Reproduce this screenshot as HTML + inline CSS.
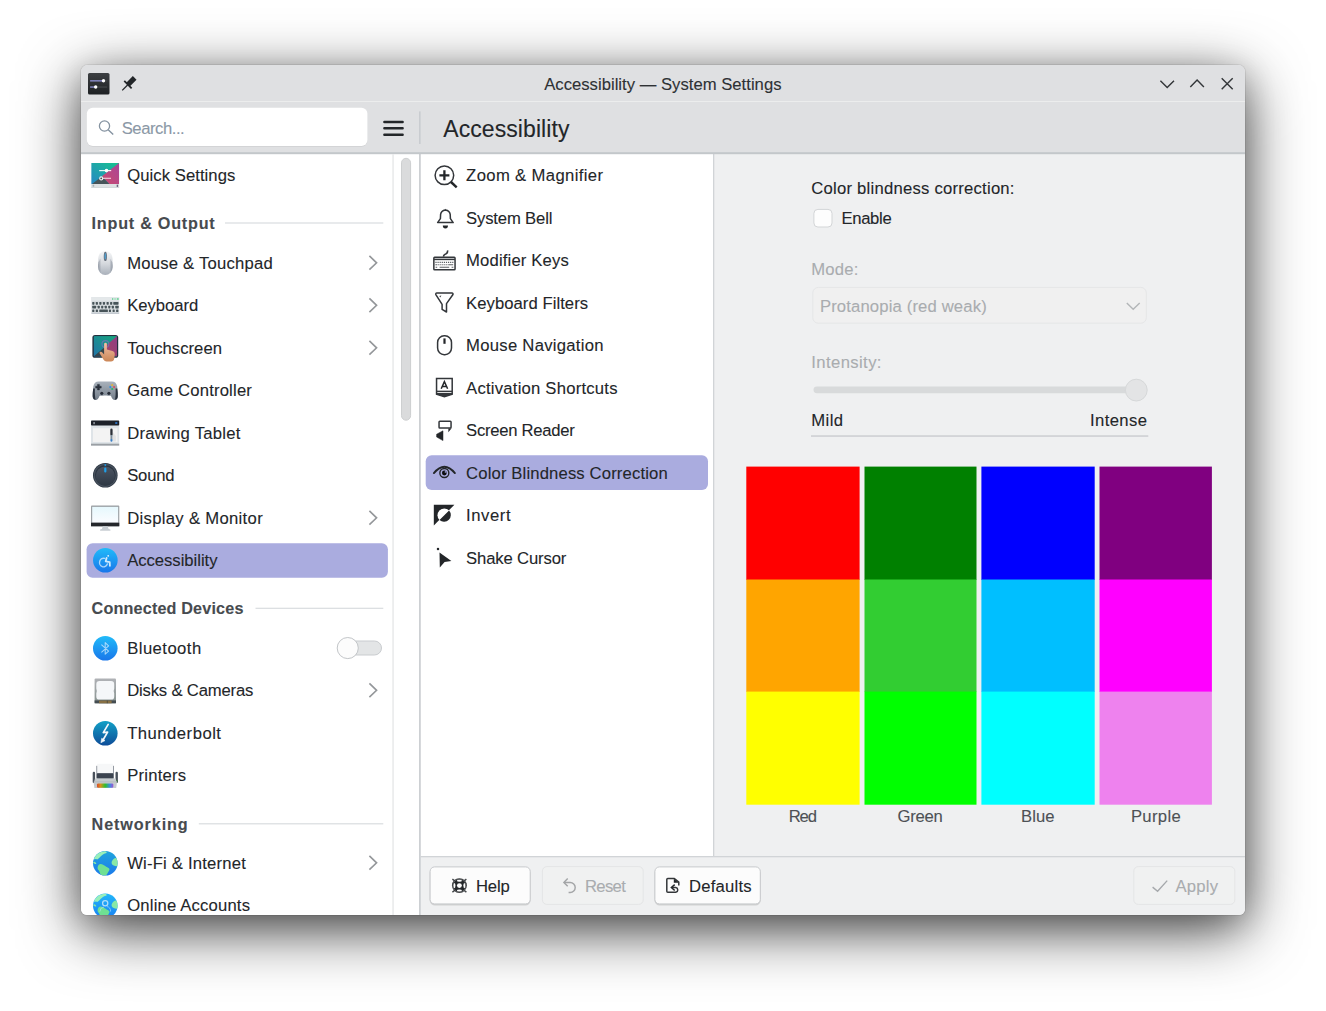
<!DOCTYPE html>
<html>
<head>
<meta charset="utf-8">
<title>Accessibility — System Settings</title>
<style>
*{box-sizing:border-box;margin:0;padding:0}
html,body{width:1326px;height:1011px;overflow:hidden;background:#fff}
body{font-family:"Liberation Sans",sans-serif;font-size:16.67px;color:#232629;position:relative}
#win{position:absolute;left:81px;top:65px;width:1164px;height:850px;background:#eff0f1;border-radius:7px 7px 6px 6px;
 box-shadow:0 0 0 1px rgba(0,0,0,.07),0 15px 60px 0 rgba(0,0,0,.72),0 7.5px 30px 0 rgba(0,0,0,.18)}
#clip{position:absolute;left:0;top:0;width:1164px;height:850px;overflow:hidden;border-radius:7px 7px 6px 6px}
#pg{position:absolute;left:-81px;top:-65px;width:1326px;height:1011px}
.t{position:absolute;white-space:nowrap;line-height:24px;height:24px;-webkit-text-stroke:0.1px currentColor}
svg{position:absolute;left:0;top:0;overflow:visible}
</style>
</head>
<body>
<div id="win"><div id="clip"><div id="pg">
<svg width="1326" height="1011" viewBox="0 0 1326 1011">
<rect x="81" y="65" width="1164" height="36" fill="#dfe0e2"/>
<rect x="81" y="101" width="1164" height="1" fill="#eceded"/>
<rect x="81" y="102" width="1164" height="51" fill="#dfe0e2"/>
<rect x="81" y="153" width="338.2" height="762" fill="#ffffff"/>
<rect x="420.5" y="153" width="292.5" height="703" fill="#ffffff"/>
<rect x="714" y="153" width="531" height="703" fill="#eff0f1"/>
<rect x="420.5" y="857" width="824.5" height="58" fill="#eff0f1"/>
<rect x="419.1" y="153" width="1.6" height="762" fill="#c9ccd0"/>
<rect x="713" y="153" width="1.3" height="703.5" fill="#d1d4d7"/>
<rect x="420.5" y="856" width="824.5" height="1.3" fill="#d1d4d7"/>
<rect x="81" y="152.2" width="1164" height="2" fill="#c3c7ca"/>
<rect x="419.2" y="111.4" width="1.3" height="32.6" fill="#c4c7cb"/>
<rect x="86.8" y="108.3" width="280.7" height="38.4" rx="6" fill="#000000" opacity=".07"/>
<rect x="86.8" y="107.8" width="280.7" height="38.2" rx="6" fill="#ffffff"/>
<rect x="392.4" y="154.2" width="1.3" height="760.8" fill="#e4e6e7"/>
<rect x="401.5" y="158.3" width="9.1" height="261.9" rx="4.55" fill="#dadbdc" stroke="#cdcfd0" stroke-width="1"/>
<rect x="86.6" y="543.2" width="301.3" height="34.6" rx="6" fill="#aaacdf"/>
<rect x="425.7" y="455.3" width="282.3" height="34.7" rx="6" fill="#aaacdf"/>
<rect x="225" y="222.4" width="158.3" height="1.2" fill="#d9dcdf"/>
<rect x="255.5" y="607.7" width="127.8" height="1.2" fill="#d9dcdf"/>
<rect x="198.8" y="823.2" width="184.5" height="1.2" fill="#d9dcdf"/>
<rect x="813.9" y="209.4" width="18.1" height="17.6" rx="4" fill="#fdfdfd" stroke="#d3d5d7" stroke-width="1"/>
<rect x="812.8" y="287.4" width="333.5" height="35.8" rx="5.5" fill="#f0f0f0" stroke="#e5e6e7" stroke-width="1"/>
<rect x="813.5" y="386.4" width="326.5" height="6.8" rx="3.4" fill="#d8dadb"/>
<rect x="1125.4" y="379.2" width="21.8" height="21.8" rx="10.9" fill="#e3e4e5" stroke="#d6d8d9" stroke-width="1"/>
<rect x="811" y="435.3" width="337.3" height="1.5" fill="#ccced1"/>
<rect x="746.3" y="466.6" width="113.3" height="113.4" fill="#ff0000"/>
<rect x="746.3" y="579.5" width="113.3" height="112.5" fill="#ffa500"/>
<rect x="746.3" y="691.6" width="113.3" height="113.1" fill="#ffff00"/>
<rect x="864.5" y="466.6" width="112" height="113.4" fill="#008000"/>
<rect x="864.5" y="579.5" width="112" height="112.5" fill="#32cd32"/>
<rect x="864.5" y="691.6" width="112" height="113.1" fill="#00ff00"/>
<rect x="981.4" y="466.6" width="113.3" height="113.4" fill="#0000ff"/>
<rect x="981.4" y="579.5" width="113.3" height="112.5" fill="#00bfff"/>
<rect x="981.4" y="691.6" width="113.3" height="113.1" fill="#00ffff"/>
<rect x="1099.5" y="466.6" width="112.4" height="113.4" fill="#800080"/>
<rect x="1099.5" y="579.5" width="112.4" height="112.5" fill="#ff00ff"/>
<rect x="1099.5" y="691.6" width="112.4" height="113.1" fill="#ee82ee"/>
<rect x="429.6" y="867.4" width="101.1" height="38.1" rx="5.5" fill="#000000" opacity=".13"/>
<rect x="430.1" y="866.9" width="100.1" height="37" rx="4.5" fill="#fcfcfc" stroke="#c8cacd" stroke-width="1"/>
<rect x="542.4" y="866.6" width="100.8" height="37.8" rx="4.5" fill="#f0f1f1" stroke="#e4e5e6" stroke-width="1"/>
<rect x="654.4" y="867.4" width="106.4" height="38.1" rx="5.5" fill="#000000" opacity=".13"/>
<rect x="654.9" y="866.9" width="105.4" height="37" rx="4.5" fill="#fcfcfc" stroke="#c8cacd" stroke-width="1"/>
<rect x="1133.8" y="866.6" width="101" height="37.8" rx="4.5" fill="#f0f1f1" stroke="#e4e5e6" stroke-width="1"/>
<rect x="339.5" y="641" width="42" height="14" rx="7" fill="#e3e5e6" stroke="#c9cccf" stroke-width="1"/>
<rect x="337.2" y="637.5" width="21.1" height="21.1" rx="10.55" fill="#fcfcfc" stroke="#c2c5c8" stroke-width="1"/>
</svg>
<div class="t" style="left:544.2px;top:73px;font-size:16.67px;letter-spacing:0.011px;color:#2e3134">Accessibility — System Settings</div>
<div class="t" style="left:443.3px;top:117px;font-size:23px;letter-spacing:0.070px">Accessibility</div>
<div class="t" style="left:121.7px;top:117px;font-size:16.67px;letter-spacing:-0.459px;color:#8b98a6">Search...</div>
<div class="t" style="left:127.2px;top:164px;font-size:16.67px;letter-spacing:0.055px">Quick Settings</div>
<div class="t" style="left:127.2px;top:252px;font-size:16.67px;letter-spacing:0.214px">Mouse &amp; Touchpad</div>
<div class="t" style="left:127.2px;top:294px;font-size:16.67px;letter-spacing:-0.045px">Keyboard</div>
<div class="t" style="left:127.2px;top:337px;font-size:16.67px;letter-spacing:0.035px">Touchscreen</div>
<div class="t" style="left:127.2px;top:379px;font-size:16.67px;letter-spacing:0.178px">Game Controller</div>
<div class="t" style="left:127.2px;top:422px;font-size:16.67px;letter-spacing:0.256px">Drawing Tablet</div>
<div class="t" style="left:127.2px;top:464px;font-size:16.67px;letter-spacing:-0.193px">Sound</div>
<div class="t" style="left:127.2px;top:507px;font-size:16.67px;letter-spacing:0.311px">Display &amp; Monitor</div>
<div class="t" style="left:127.2px;top:549px;font-size:16.67px;letter-spacing:-0.035px">Accessibility</div>
<div class="t" style="left:127.2px;top:637px;font-size:16.67px;letter-spacing:0.451px">Bluetooth</div>
<div class="t" style="left:127.2px;top:679px;font-size:16.67px;letter-spacing:-0.175px">Disks &amp; Cameras</div>
<div class="t" style="left:127.2px;top:722px;font-size:16.67px;letter-spacing:0.489px">Thunderbolt</div>
<div class="t" style="left:127.2px;top:764px;font-size:16.67px;letter-spacing:0.216px">Printers</div>
<div class="t" style="left:127.2px;top:852px;font-size:16.67px;letter-spacing:0.193px">Wi-Fi &amp; Internet</div>
<div class="t" style="left:127.2px;top:894px;font-size:16.67px;letter-spacing:0.173px">Online Accounts</div>
<div class="t" style="left:91.6px;top:210px;font-size:16.2px;letter-spacing:0.755px;transform:translateY(0.50px);font-weight:bold;color:#474b4f">Input &amp; Output</div>
<div class="t" style="left:91.6px;top:596px;font-size:16.2px;letter-spacing:0.154px;font-weight:bold;color:#474b4f">Connected Devices</div>
<div class="t" style="left:91.6px;top:811px;font-size:16.2px;letter-spacing:0.884px;transform:translateY(0.50px);font-weight:bold;color:#474b4f">Networking</div>
<div class="t" style="left:466.1px;top:164px;font-size:16.67px;letter-spacing:0.363px">Zoom &amp; Magnifier</div>
<div class="t" style="left:466.1px;top:207px;font-size:16.67px;letter-spacing:-0.164px">System Bell</div>
<div class="t" style="left:466.1px;top:249px;font-size:16.67px;letter-spacing:0.149px">Modifier Keys</div>
<div class="t" style="left:466.1px;top:292px;font-size:16.67px;letter-spacing:0.048px">Keyboard Filters</div>
<div class="t" style="left:466.1px;top:334px;font-size:16.67px;letter-spacing:0.271px">Mouse Navigation</div>
<div class="t" style="left:466.1px;top:377px;font-size:16.67px;letter-spacing:0.221px">Activation Shortcuts</div>
<div class="t" style="left:466.1px;top:419px;font-size:16.67px;letter-spacing:-0.278px">Screen Reader</div>
<div class="t" style="left:466.1px;top:462px;font-size:16.67px;letter-spacing:0.139px">Color Blindness Correction</div>
<div class="t" style="left:466.1px;top:504px;font-size:16.67px;letter-spacing:0.566px">Invert</div>
<div class="t" style="left:466.1px;top:547px;font-size:16.67px;letter-spacing:-0.140px">Shake Cursor</div>
<div class="t" style="left:811.3px;top:177px;font-size:16.67px;letter-spacing:0.231px">Color blindness correction:</div>
<div class="t" style="left:841.4px;top:207px;font-size:16.67px;letter-spacing:-0.315px">Enable</div>
<div class="t" style="left:811.3px;top:258px;font-size:16.67px;letter-spacing:0.176px;color:#a9acaf">Mode:</div>
<div class="t" style="left:819.9px;top:295px;font-size:16.67px;letter-spacing:0.146px;color:#a9acaf">Protanopia (red weak)</div>
<div class="t" style="left:811.3px;top:351px;font-size:16.67px;letter-spacing:0.392px;color:#a9acaf">Intensity:</div>
<div class="t" style="left:811.3px;top:408px;font-size:16.67px;letter-spacing:0.384px;transform:translateY(0.50px)">Mild</div>
<div class="t" style="left:1090.0px;top:408px;font-size:16.67px;letter-spacing:0.377px;transform:translateY(0.50px)">Intense</div>
<div class="t" style="left:788.8px;top:804px;font-size:16.67px;letter-spacing:-1.231px;transform:translateY(0.50px);color:#4d5155">Red</div>
<div class="t" style="left:897.4px;top:804px;font-size:16.67px;letter-spacing:-0.199px;transform:translateY(0.50px);color:#4d5155">Green</div>
<div class="t" style="left:1021.0px;top:804px;font-size:16.67px;letter-spacing:0.052px;transform:translateY(0.50px);color:#4d5155">Blue</div>
<div class="t" style="left:1130.9px;top:804px;font-size:16.67px;letter-spacing:0.349px;transform:translateY(0.50px);color:#4d5155">Purple</div>
<div class="t" style="left:476.0px;top:875px;font-size:16.67px;letter-spacing:-0.189px">Help</div>
<div class="t" style="left:584.9px;top:875px;font-size:16.67px;letter-spacing:-0.629px;color:#a9acaf">Reset</div>
<div class="t" style="left:689.0px;top:875px;font-size:16.67px;letter-spacing:0.213px">Defaults</div>
<div class="t" style="left:1175.5px;top:875px;font-size:16.67px;letter-spacing:0.207px;color:#a9acaf">Apply</div>
<svg width="1326" height="1011" viewBox="0 0 1326 1011">
<defs>
<linearGradient id="gApp" x1="0" y1="0" x2="0" y2="1"><stop offset="0" stop-color="#3d4043"/><stop offset="1" stop-color="#1d2023"/></linearGradient>
<linearGradient id="gBlue" x1="0" y1="0" x2="0" y2="1"><stop offset="0" stop-color="#21bbf9"/><stop offset="1" stop-color="#1976ea"/></linearGradient>
<linearGradient id="gTb" x1="0" y1="0" x2="0" y2="1"><stop offset="0" stop-color="#12a0c6"/><stop offset="1" stop-color="#0e4c98"/></linearGradient>
<linearGradient id="gGlobe" x1="0" y1="0" x2="0" y2="1"><stop offset="0" stop-color="#20a4dc"/><stop offset="1" stop-color="#1b7aec"/></linearGradient>
<linearGradient id="gGlobe2" x1="0" y1="0" x2="0" y2="1"><stop offset="0" stop-color="#22b6f9"/><stop offset="1" stop-color="#1a82f2"/></linearGradient>
<linearGradient id="gTeal" x1="0" y1="1" x2="1" y2="0"><stop offset="0" stop-color="#2687c6"/><stop offset="1" stop-color="#16c48c"/></linearGradient>
<linearGradient id="gPink" x1="0" y1="1" x2="1" y2="0"><stop offset="0" stop-color="#cc4a6c"/><stop offset="1" stop-color="#a8459a"/></linearGradient>
<linearGradient id="gMouse" x1="0" y1="0" x2="0" y2="1"><stop offset="0" stop-color="#f6f7f8"/><stop offset="0.55" stop-color="#d3d7dc"/><stop offset="1" stop-color="#a9b0ba"/></linearGradient>
<linearGradient id="gMouseE" x1="0" y1="0" x2="1" y2="0"><stop offset="0" stop-color="#7c8492" stop-opacity=".75"/><stop offset="0.22" stop-color="#7c8492" stop-opacity="0"/><stop offset="0.78" stop-color="#7c8492" stop-opacity="0"/><stop offset="1" stop-color="#7c8492" stop-opacity=".75"/></linearGradient>
<linearGradient id="gPad" x1="0" y1="0" x2="0" y2="1"><stop offset="0" stop-color="#a9b2bc"/><stop offset="1" stop-color="#747e8a"/></linearGradient>
<linearGradient id="gKnob" x1="0" y1="0" x2="0" y2="1"><stop offset="0" stop-color="#4c5462"/><stop offset="1" stop-color="#2e3844"/></linearGradient>
<linearGradient id="gScr" x1="0" y1="0" x2="0" y2="1"><stop offset="0" stop-color="#e6f8fd"/><stop offset="1" stop-color="#fbfcff"/></linearGradient>
<linearGradient id="gSkin" x1="0" y1="0" x2="0" y2="1"><stop offset="0" stop-color="#f3c0a6"/><stop offset="1" stop-color="#cb8656"/></linearGradient>
<linearGradient id="gRain" x1="0" y1="0" x2="1" y2="0"><stop offset="0" stop-color="#d84a2a"/><stop offset="0.22" stop-color="#d8921c"/><stop offset="0.5" stop-color="#2ec02a"/><stop offset="0.78" stop-color="#3a8ee0"/><stop offset="1" stop-color="#a054d0"/></linearGradient>
<linearGradient id="gDisk" x1="0" y1="0" x2="0" y2="1"><stop offset="0" stop-color="#b0b2b6"/><stop offset="1" stop-color="#87928f"/></linearGradient>
<clipPath id="cGlobe1"><circle cx="105.3" cy="863.3" r="12.3"/></clipPath>
<clipPath id="cGlobe2"><circle cx="105.3" cy="905.8" r="12.3"/></clipPath>
<clipPath id="cTab"><rect x="93.6" y="336.1" width="23.4" height="20.5" rx="1.2"/></clipPath>
<clipPath id="cQs"><rect x="91.2" y="162.9" width="28" height="21.1"/></clipPath>
</defs>
<rect x="88" y="72.9" width="21.5" height="21.6" rx="1.6" fill="url(#gApp)"/>
<rect x="90.1" y="80.2" width="13.5" height="1.3" fill="#8f92d6"/><rect x="104" y="80.4" width="3.2" height="1" fill="#46494c"/><circle cx="103.5" cy="80.8" r="1.7" fill="#fff"/>
<rect x="90.1" y="86.4" width="5.5" height="1.3" fill="#8f92d6"/><rect x="96" y="86.5" width="11.2" height="1.1" fill="#46494c"/><circle cx="95.7" cy="87" r="1.7" fill="#fff"/>
<g transform="translate(127.6 85) rotate(45)" fill="#232629"><rect x="-2.6" y="-10" width="5.2" height="9.6"/><rect x="-5.2" y="-1.4" width="10.4" height="1.8"/><rect x="-0.65" y="0" width="1.3" height="7.6"/></g>
<path d="M1160.4 80.8 L1167.2 87.5 L1174 80.8" fill="none" stroke="#34373a" stroke-width="1.45"/>
<path d="M1190.3 86.9 L1197.1 80.1 L1203.9 86.9" fill="none" stroke="#34373a" stroke-width="1.45"/>
<path d="M1221.7 78.2 L1232.7 89.2 M1232.7 78.2 L1221.7 89.2" fill="none" stroke="#34373a" stroke-width="1.45"/>
<circle cx="104.5" cy="126" r="5.1" fill="none" stroke="#8492a0" stroke-width="1.3"/><path d="M108.2 129.8 L113.2 134.5" stroke="#8492a0" stroke-width="1.4" fill="none"/>
<path d="M384.4 121.9 H402.6 M384.4 128.3 H402.6 M384.4 134.7 H402.6" stroke="#232629" stroke-width="2.5" stroke-linecap="round" fill="none"/>
<path d="M369.4 255.9 L376.6 262.8 L369.4 269.7" fill="none" stroke="#94979a" stroke-width="1.6"/>
<path d="M369.4 298.4 L376.6 305.3 L369.4 312.2" fill="none" stroke="#94979a" stroke-width="1.6"/>
<path d="M369.4 340.9 L376.6 347.8 L369.4 354.7" fill="none" stroke="#94979a" stroke-width="1.6"/>
<path d="M369.4 510.9 L376.6 517.8 L369.4 524.7" fill="none" stroke="#94979a" stroke-width="1.6"/>
<path d="M369.4 683.4 L376.6 690.3 L369.4 697.2" fill="none" stroke="#94979a" stroke-width="1.6"/>
<path d="M369.4 855.9 L376.6 862.8 L369.4 869.7" fill="none" stroke="#94979a" stroke-width="1.6"/>
<path d="M1126.8 302.9 L1133.2 309.3 L1139.7 302.9" fill="none" stroke="#b3b6b8" stroke-width="1.4"/>
<path d="M1152.6 887.1 L1157.6 891.2 L1167.2 880.6" fill="none" stroke="#a6a9ac" stroke-width="1.4"/>
<g clip-path="url(#cQs)"><rect x="91.2" y="162.9" width="28" height="21.1" fill="url(#gTeal)"/><path d="M119.2 162.9 L101.9 176.2 L109.3 184 L119.2 184 Z" fill="url(#gPink)"/><path d="M92 184 L101.9 176.6 L109.3 184 Z" fill="#47555a"/></g>
<rect x="91.2" y="184" width="28" height="3.4" fill="#dde1e3"/><rect x="91.2" y="187.2" width="28" height="0.8" fill="#b9c4c8" opacity=".7"/><rect x="92.6" y="184.7" width="1.6" height="2" fill="#a9b0b4"/><rect x="116.7" y="184.7" width="1.4" height="2.2" fill="#6a5a78"/>
<rect x="99.2" y="170" width="12" height="1.2" fill="#fff" opacity=".9"/><circle cx="106.5" cy="170.6" r="1.8" fill="#fff"/>
<rect x="102.6" y="177.7" width="8.4" height="1.3" fill="#f3c6d6" opacity=".9"/><circle cx="101.2" cy="178.4" r="1.5" fill="#4a4a52" stroke="#f2f2f4" stroke-width="1.1"/>
<rect x="98.1" y="250.9" width="14.5" height="24.1" rx="7.2" ry="8" fill="url(#gMouse)"/><rect x="98.1" y="257" width="14.5" height="18" rx="7.2" ry="8" fill="url(#gMouseE)"/>
<ellipse cx="105.35" cy="256.4" rx="1.6" ry="4.7" fill="#69727e"/><ellipse cx="105.35" cy="256.2" rx="0.85" ry="3.1" fill="#4f9ccb"/>
<rect x="91.4" y="297.1" width="27.8" height="16.5" fill="#d7dcdf"/><rect x="91.4" y="297.1" width="27.8" height="3.6" fill="#e4e8ea"/><rect x="91.4" y="312.8" width="27.8" height="0.9" fill="#b5bcc6"/>
<rect x="112" y="298" width="1.3" height="2" fill="#7fd6a6"/><rect x="114.4" y="298" width="1.3" height="2" fill="#9fe0bc"/><rect x="116.8" y="298" width="1.9" height="2" fill="#7fd6a6"/>
<rect x="92.23" y="302.00" width="2.19" height="2.7" rx="0.6" fill="#475459"/>
<rect x="95.76" y="302.00" width="2.19" height="2.7" rx="0.6" fill="#475459"/>
<rect x="99.30" y="302.00" width="2.19" height="2.7" rx="0.6" fill="#475459"/>
<rect x="102.84" y="302.00" width="2.19" height="2.7" rx="0.6" fill="#475459"/>
<rect x="106.54" y="302.00" width="2.19" height="2.7" rx="0.6" fill="#475459"/>
<rect x="110.07" y="302.00" width="2.19" height="2.7" rx="0.6" fill="#475459"/>
<rect x="113.27" y="302.00" width="5.22" height="2.7" rx="0.6" fill="#475459"/>
<rect x="92.23" y="305.70" width="3.87" height="2.7" rx="0.6" fill="#475459"/>
<rect x="97.62" y="305.70" width="2.19" height="2.7" rx="0.6" fill="#475459"/>
<rect x="101.15" y="305.70" width="2.09" height="2.7" rx="0.6" fill="#475459"/>
<rect x="104.69" y="305.70" width="2.19" height="2.7" rx="0.6" fill="#475459"/>
<rect x="108.22" y="305.70" width="2.09" height="2.7" rx="0.6" fill="#475459"/>
<rect x="111.76" y="305.70" width="2.19" height="2.7" rx="0.6" fill="#475459"/>
<rect x="115.29" y="305.70" width="3.37" height="2.7" rx="0.6" fill="#475459"/>
<rect x="92.23" y="309.40" width="2.12" height="2.7" rx="0.6" fill="#475459"/>
<rect x="95.76" y="309.40" width="2.19" height="2.7" rx="0.6" fill="#475459"/>
<rect x="99.30" y="309.40" width="8.59" height="2.7" rx="0.6" fill="#475459"/>
<rect x="108.90" y="309.40" width="2.09" height="2.7" rx="0.6" fill="#475459"/>
<rect x="112.60" y="309.40" width="2.09" height="2.7" rx="0.6" fill="#475459"/>
<rect x="116.13" y="309.40" width="2.26" height="2.7" rx="0.6" fill="#475459"/>
<rect x="92.4" y="334.9" width="25.8" height="22.9" rx="2.6" fill="#24303e"/>
<g clip-path="url(#cTab)"><rect x="93.6" y="336.1" width="23.4" height="20.5" fill="url(#gTeal)"/><path d="M117 336.1 L104 347.5 L110 356.6 L117 356.6 Z" fill="url(#gPink)"/><path d="M93.6 356.6 L104 347.8 L110 356.6 Z" fill="#3f4c52"/><rect x="93.6" y="336.1" width="23.4" height="20.5" fill="#10202c" opacity=".18"/></g>
<circle cx="105.4" cy="344" r="3.4" fill="none" stroke="#6d74b4" stroke-width="1.1" opacity=".85"/>
<path d="M104.1 344.2 A1.4 1.4 0 0 1 106.9 344.2 L106.9 349.6 L112.5 351 Q114.8 351.6 114.8 354 L114.3 358.6 Q113.8 361.6 111 361.6 L106.6 361.6 Q104.6 361.6 103.4 359.6 L99.6 353.2 Q99.4 352 100.4 351.8 Q101.6 351.6 102.4 352.6 L104.1 354.4 Z" fill="url(#gSkin)"/>
<path d="M98.6 381.4 L111.9 381.4 Q116.4 381.4 117.2 386.6 L117.9 395.4 Q118 399.9 114.7 399.9 Q112.4 399.9 111 396 L110.4 395.6 L100.1 395.6 L99.5 396 Q98.1 399.9 95.8 399.9 Q92.5 399.9 92.6 395.4 L93.3 386.6 Q94.1 381.4 98.6 381.4 Z" fill="url(#gPad)"/>
<path d="M93.2 388.5 Q92.4 394 92.7 396.6 Q93.2 399.8 95.6 399.8 Q94.6 396 94.9 388.5 Z" fill="#2a323e"/><path d="M117.3 388.5 Q118.1 394 117.8 396.6 Q117.3 399.8 114.9 399.8 Q115.9 396 115.6 388.5 Z" fill="#2a323e"/>
<path d="M97.5 384.4 h1.9 v1.8 h1.8 v1.9 h-1.8 v1.8 h-1.9 v-1.8 h-1.8 v-1.9 h1.8 Z" fill="#29303b" stroke="#29303b" stroke-width=".5" stroke-linejoin="round"/>
<circle cx="112.2" cy="385.1" r="1.05" fill="#e3b23a"/><circle cx="110.3" cy="387.1" r="1.05" fill="#2f8fe0"/><circle cx="114.1" cy="387.1" r="1.05" fill="#d6525c"/><circle cx="112.2" cy="389" r="1.05" fill="#2fb563"/>
<circle cx="101.8" cy="393.3" r="2.5" fill="#8d96a1"/><circle cx="101.8" cy="393.3" r="1.6" fill="#252c37"/><circle cx="108.9" cy="393.3" r="2.5" fill="#8d96a1"/><circle cx="108.9" cy="393.3" r="1.6" fill="#252c37"/>
<rect x="91" y="420.6" width="28.2" height="25" fill="#dfe4e8"/><rect x="91" y="420.6" width="28.2" height="5" rx="0.8" fill="#1d2129"/><rect x="91" y="443.7" width="28.2" height="1.9" fill="#9a9fa4"/>
<rect x="93" y="428.2" width="24.4" height="13.8" fill="#f3f3f3"/><rect x="93.3" y="422" width="1.6" height="2.2" fill="#8a9098"/><rect x="115.2" y="422" width="2.2" height="2" rx=".5" fill="#2c6cb6"/>
<path d="M112.6 432 L115.8 436 L115.8 441.6 L113 441.6 Z" fill="#dcdcdc" opacity=".7"/>
<rect x="110.3" y="428.6" width="2.3" height="7" rx="1.1" fill="#2b3038"/><rect x="110.5" y="435" width="1.9" height="4.6" fill="#7d8e9c"/><rect x="110.4" y="439" width="2.1" height="2.7" rx="1" fill="#3a7ec4"/>
<circle cx="105.3" cy="475.3" r="12.3" fill="#2c3642"/><circle cx="105.3" cy="475.3" r="11" fill="none" stroke="#5e6875" stroke-width="1.2" opacity=".55"/><circle cx="105.3" cy="476" r="9.6" fill="url(#gKnob)"/>
<rect x="104.2" y="467.6" width="2.2" height="5" rx="1.1" fill="#1fa0ea"/><circle cx="105.3" cy="465" r="1" fill="#1f92d8"/>
<rect x="91" y="505.6" width="28.3" height="20.7" rx="0.9" fill="#9da2a6"/><rect x="92.2" y="506.9" width="25.9" height="15.8" fill="url(#gScr)"/><rect x="91" y="522.7" width="28.3" height="3.6" fill="#25272b"/>
<path d="M102.8 526.3 L107.7 526.3 L108.6 529 L110.4 529.6 L110.4 530.8 L100.1 530.8 L100.1 529.6 L101.9 529 Z" fill="#c9ced3"/>
<circle cx="105.35" cy="560.3" r="12.3" fill="url(#gBlue)"/>
<g fill="none" stroke="#cfe9fd" stroke-linecap="round" stroke-linejoin="round"><circle cx="108.2" cy="555.8" r="0.9" fill="#e4f4ff" stroke="none"/><path d="M104.7 558.4 A4 4.3 0 1 0 107.3 564" stroke-width="1.4" opacity=".8"/><path d="M106.6 557.9 L105.7 561.3 L109.7 562.1 L109.9 565.8" stroke-width="1.8"/></g>
<circle cx="105.3" cy="648.3" r="12.3" fill="url(#gBlue)"/><path d="M101.4 644.6 L108.6 651.2 L105.2 654.2 L105.2 642.6 L108.6 645.8 L101.4 652.4" fill="none" stroke="#d6ecfd" stroke-width="1.05" opacity=".75" stroke-linejoin="round"/>
<rect x="94.6" y="678.6" width="21.4" height="24.7" rx="1" fill="url(#gDisk)"/><path d="M99.5 681 L111 681 Q114.2 681 114.2 684.2 L114.2 688.6 Q113.2 691 114.2 693.4 L114.2 696.4 Q114.2 699.6 111 699.6 L99.5 699.6 Q96.3 699.6 96.3 696.4 L96.3 693.4 Q97.3 691 96.3 688.6 L96.3 684.2 Q96.3 681 99.5 681 Z" fill="#f5f7f9"/>
<rect x="94.6" y="700.4" width="21.4" height="2.9" fill="#454d52"/><rect x="99" y="700.6" width="12.6" height="2.6" fill="#877044"/><rect x="106.8" y="700.6" width="0.9" height="2.6" fill="#4e4a3e"/>
<circle cx="105.3" cy="733.3" r="12.3" fill="url(#gTb)"/><path d="M108.2 724.4 L103.3 732.6 L107.6 732.1 L103 740" fill="none" stroke="#f4f8fb" stroke-width="1.7" stroke-linecap="round" stroke-linejoin="round"/><path d="M100.9 742.7 L101.7 738.3 L105 740.6 Z" fill="#f4f8fb" stroke="#f4f8fb" stroke-width=".6" stroke-linejoin="round"/>
<rect x="96.3" y="765.8" width="17.6" height="13" fill="#8b9199"/><rect x="97.2" y="763.8" width="15.8" height="9.6" fill="#f6f7f8"/><rect x="96.8" y="773.2" width="16.6" height="5.4" rx="0.8" fill="#3b434f"/>
<rect x="92.7" y="771.8" width="2.4" height="11.2" rx="1.1" fill="#49515b"/><rect x="115.5" y="771.8" width="2.4" height="11.2" rx="1.1" fill="#49515b"/><rect x="116" y="780" width="1.5" height="2.4" rx=".6" fill="#3a7c3c"/>
<path d="M95 778.6 L115.6 778.6 L116.9 783 L116.2 788 L94.4 788 L93.7 783 Z" fill="#c6cbce"/><rect x="93.8" y="781.4" width="23" height="1" fill="#b4babf"/><rect x="97" y="783.4" width="16.3" height="4.3" rx="1.2" fill="url(#gRain)"/>
<circle cx="105.3" cy="863.3" r="12.3" fill="url(#gGlobe)"/><g clip-path="url(#cGlobe1)"><path d="M94.08 858.63 Q94.08 857.78 95.60 855.76 Q97.11 853.74 99.64 852.57 Q102.16 851.39 104.18 851.22 Q106.20 851.05 106.62 852.14 Q107.04 853.24 105.70 853.36 Q104.35 853.47 102.58 854.79 Q100.81 856.10 99.13 857.95 Q97.45 859.80 96.77 859.30 Q96.10 858.79 95.09 859.13 Q94.08 859.47 94.08 858.63 Z" fill="#98efba"/><path d="M93.19 862.67 Q92.90 862.33 93.83 861.88 Q94.75 861.42 95.63 862.46 Q96.51 863.51 96.17 863.88 Q95.83 864.25 94.65 863.63 Q93.47 863.00 93.19 862.67 Z" fill="#86e8a8"/><path d="M97.62 868.42 Q97.45 867.55 97.92 866.20 Q98.39 864.86 99.43 864.32 Q100.48 863.78 101.99 864.28 Q103.51 864.79 104.86 865.83 Q106.20 866.88 107.72 867.55 Q109.23 868.22 109.43 868.93 Q109.64 869.64 108.85 871.12 Q108.05 872.60 106.99 874.28 Q105.93 875.97 104.05 875.80 Q102.16 875.63 101.15 874.82 Q100.14 874.01 99.80 872.67 Q99.47 871.32 98.63 870.31 Q97.78 869.30 97.62 868.42 Z" fill="#6fe093"/><path d="M114.20 858.54 Q115.80 857.28 117.06 858.88 Q118.32 860.48 118.32 863.34 Q118.32 866.20 116.64 866.24 Q114.96 866.27 113.78 865.60 Q112.60 864.92 111.93 863.88 Q111.25 862.84 111.93 861.32 Q112.60 859.80 114.20 858.54 Z" fill="#88e8a6"/></g>
<circle cx="105.3" cy="905.8" r="12.3" fill="url(#gGlobe2)"/><g clip-path="url(#cGlobe2)"><path d="M94.08 901.13 Q94.08 900.28 95.60 898.26 Q97.11 896.24 99.64 895.07 Q102.16 893.89 104.18 893.72 Q106.20 893.55 106.62 894.64 Q107.04 895.74 105.70 895.86 Q104.35 895.97 102.58 897.29 Q100.81 898.60 99.13 900.45 Q97.45 902.30 96.77 901.80 Q96.10 901.29 95.09 901.63 Q94.08 901.97 94.08 901.13 Z" fill="#98efba"/><path d="M93.19 905.17 Q92.90 904.83 93.83 904.38 Q94.75 903.92 95.63 904.96 Q96.51 906.01 96.17 906.38 Q95.83 906.75 94.65 906.13 Q93.47 905.50 93.19 905.17 Z" fill="#86e8a8"/><path d="M97.62 910.92 Q97.45 910.05 97.92 908.70 Q98.39 907.36 99.43 906.82 Q100.48 906.28 101.99 906.78 Q103.51 907.29 104.86 908.33 Q106.20 909.38 107.72 910.05 Q109.23 910.72 109.43 911.43 Q109.64 912.14 108.85 913.62 Q108.05 915.10 106.99 916.78 Q105.93 918.47 104.05 918.30 Q102.16 918.13 101.15 917.32 Q100.14 916.51 99.80 915.17 Q99.47 913.82 98.63 912.81 Q97.78 911.80 97.62 910.92 Z" fill="#6fe093"/><path d="M114.20 901.04 Q115.80 899.78 117.06 901.38 Q118.32 902.98 118.32 905.84 Q118.32 908.70 116.64 908.74 Q114.96 908.77 113.78 908.10 Q112.60 907.42 111.93 906.38 Q111.25 905.34 111.93 903.82 Q112.60 902.30 114.20 901.04 Z" fill="#88e8a6"/></g>
<circle cx="105.2" cy="903.3" r="2.6" fill="none" stroke="#c8e8fc" stroke-width="1.3" opacity=".85"/><path d="M99.8 911.6 Q100 907.4 104 907 M107 906.6 Q110.6 907 110.6 911.6" fill="none" stroke="#bfe4fb" stroke-width="1" opacity=".6"/>
<circle cx="444.4" cy="175.3" r="9.3" fill="none" stroke="#33363a" stroke-width="1.5"/><path d="M439.4 175.3 H449.4 M444.4 170.3 V180.3" stroke="#232629" stroke-width="2.3" fill="none"/><path d="M451 182 L456.7 187.3" stroke="#232629" stroke-width="2.4" fill="none"/>
<path d="M437.6 222.6 L440.4 218.6 L440.6 214.4 Q441 210.6 445.4 209.9 Q449.8 210.6 450.2 214.4 L450.4 218.6 L453.2 222.6 Z" fill="none" stroke="#33363a" stroke-width="1.5" stroke-linejoin="round"/><path d="M444.6 209.8 L445.4 208.8 L446.2 209.8 Z" fill="#33363a"/><path d="M442.8 225.6 A2.6 2.9 0 0 0 448 225.6 Z" fill="#232629"/>
<rect x="433.85" y="257.35" width="21.2" height="12.4" rx="0.8" fill="none" stroke="#33363a" stroke-width="1.5"/><path d="M433.85 259.4 H455" fill="none" stroke="#33363a" stroke-width="1.5" stroke-width="0.9"/><path d="M443.4 256.6 Q443.8 254.4 445.6 254 Q447.8 253.4 447.6 250.4" fill="none" stroke="#33363a" stroke-width="1.5" stroke-width="1.1"/>
<path d="M435.4 262.4 H453.6" stroke="#5a5e62" stroke-width="1.1" stroke-dasharray="1.2 0.9" fill="none"/><path d="M435.4 264.8 H453.6" stroke="#5a5e62" stroke-width="1.1" stroke-dasharray="2 0.8 1.2 0.8 1.2 0.8 1.2 0.8 1.2 0.8 1.2 0.8 3 0" fill="none"/><path d="M435.6 267.2 H437.2 M439.6 267.2 H449.2 M451.6 267.2 H453.4" stroke="#5a5e62" stroke-width="1.1" fill="none"/>
<path d="M437 292.9 L451.8 292.9 Q453.6 293.2 452.8 294.8 L446.5 303.6 L446.5 312 L442.1 309.4 L442.1 304.4 L436 294.8 Q435.2 293.2 437 292.9 Z" fill="none" stroke="#33363a" stroke-width="1.5" stroke-linejoin="round"/><path d="M439.4 296 L441.4 295.6 L440.2 297.4 Z" fill="#33363a"/>
<rect x="437.6" y="335.8" width="13.9" height="18.9" rx="6.6" fill="none" stroke="#33363a" stroke-width="1.5" stroke-width="1.4"/><path d="M444.5 338.4 V343.8" stroke="#232629" stroke-width="2.2" fill="none"/>
<path d="M436.55 378.55 H452.2 V394.2 L444.4 396.8 L436.55 394.2 Z" fill="none" stroke="#33363a" stroke-width="1.5" stroke-linejoin="miter"/><path d="M436.55 391.4 H452.2" fill="none" stroke="#33363a" stroke-width="1.5" stroke-width="1"/><path d="M436.55 393 H452.2 V394.2 L444.4 396.8 L436.55 394.2 Z" fill="#33363a"/>
<path d="M441.2 388.8 L444.4 381.6 L447.6 388.8 M442.4 386.4 H446.4" fill="none" stroke="#232629" stroke-width="1.5"/>
<rect x="439.05" y="421.25" width="12" height="6.7" rx="0.8" fill="none" stroke="#33363a" stroke-width="1.5" stroke-width="1.5"/><path d="M448.4 428.6 L451.4 428.6 L448.4 432.2 Z" fill="#232629"/><path d="M436.6 434.2 L443 430.8 L443 440.6 L436.6 437 Z" fill="#232629" stroke="#232629" stroke-width=".5" stroke-linejoin="round"/>
<path d="M433.9 473.1 Q444.4 460.4 454.9 473.1" fill="none" stroke="#232629" stroke-width="1.9" stroke-linecap="round"/><circle cx="444.35" cy="473" r="4.5" fill="none" stroke="#232629" stroke-width="1.4"/><circle cx="444.35" cy="473" r="2.4" fill="#0c0d0e"/><circle cx="445.6" cy="471.9" r="0.95" fill="#8f92c8"/>
<path d="M433.8 504.8 L454.4 504.8 L433.8 525.4 Z" fill="#232629"/><circle cx="444.3" cy="515.3" r="6.8" fill="#fff"/><path d="M449.1 510.5 A6.8 6.8 0 0 1 439.5 520.1 Z" fill="#232629"/>
<circle cx="438" cy="549" r="1.25" fill="#232629"/><path d="M439.5 552.4 L451.4 561 L444.6 562 L439.8 567.6 Z" fill="#232629"/>
<circle cx="459.4" cy="885.6" r="7.45" fill="#232629"/><circle cx="459.4" cy="885.6" r="2.45" fill="#fcfcfc"/><ellipse cx="459.4" cy="880.65" rx="2.55" ry="1.0" fill="#fcfcfc"/><ellipse cx="459.4" cy="890.5500000000001" rx="2.55" ry="1.0" fill="#fcfcfc"/><ellipse cx="454.45" cy="885.6" rx="1.0" ry="2.55" fill="#fcfcfc"/><ellipse cx="464.34999999999997" cy="885.6" rx="1.0" ry="2.55" fill="#fcfcfc"/><circle cx="459.4" cy="885.6" r="6.55" fill="none" stroke="#fcfcfc" stroke-width="0.45" opacity=".55"/><path d="M454.4 880.6 l-2 -1.5 M464.4 880.6 l2 -1.5 M454.4 890.6 l-2 1.5 M464.4 890.6 l2 1.5" stroke="#45484b" stroke-width="1.4" fill="none"/>
<path d="M564.2 882.5 H570.2 A5 5 0 0 1 570.2 892.5 H568.6" fill="none" stroke="#a3a5a7" stroke-width="1.45"/><path d="M567.7 878.6 L563.9 882.5 L567.7 886.3" fill="none" stroke="#a3a5a7" stroke-width="1.45"/>
<path d="M678.8 885.4 V882.2 L674.4 878.6 H667.8 Q666.8 878.6 666.8 879.6 V891.3 Q666.8 892.3 667.8 892.3 H675.8 A2.45 2.45 0 0 0 675.8 887.5 H672" fill="none" stroke="#34373a" stroke-width="1.5" stroke-linejoin="round"/><path d="M673.8 878.8 L673.8 882.8 L678.6 882.8 Z" fill="#232629"/><path d="M674.7 884.6 L671.4 887.5 L674.7 890.5" fill="none" stroke="#232629" stroke-width="1.5"/>
</svg>

</div></div></div>
</body>
</html>
